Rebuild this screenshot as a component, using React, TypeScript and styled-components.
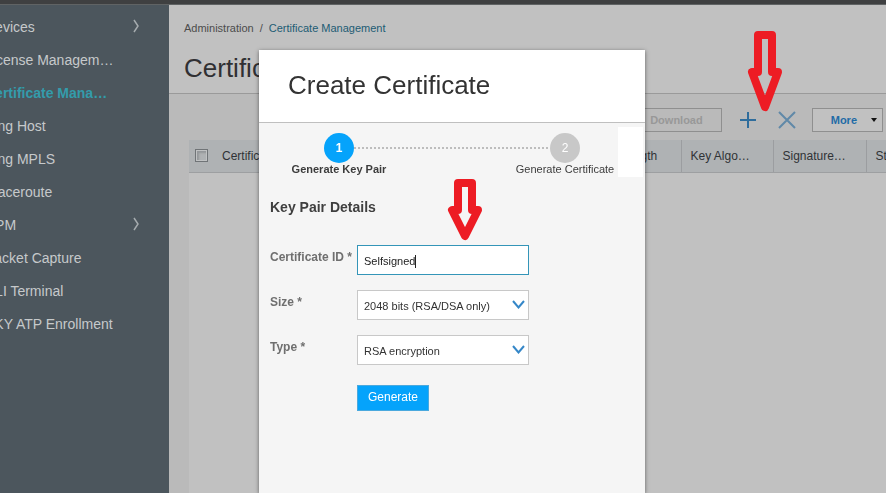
import React from "react";
import styled, { createGlobalStyle } from "styled-components";

const GlobalStyle = createGlobalStyle`
  *, *::before, *::after { box-sizing: border-box; }
  html, body, #root { height: 100%; }
  body {
    margin: 0;
    overflow: hidden;
    font-family: "Liberation Sans", Arial, sans-serif;
    font-size: 12px;
    color: #333;
    background: #c1c1c1;
  }
  button, input, select { font-family: inherit; }
`;

const Page = styled.div`
  display: flex;
  flex-direction: column;
  min-height: 100vh;
`;

const TopBar = styled.div`
  height: 5px;
  background: #3f4041;
  border-bottom: 1px solid #606364;
`;

const Columns = styled.div`
  display: flex;
  flex: 1;
`;

const Sidebar = styled.nav`
  flex: 0 0 169px;
  overflow: hidden;
  background: #4c565d;
`;

const NavList = styled.ul`
  list-style: none;
  margin: 5px 28px 0 -15px;
  padding: 0;
`;

const NavLink = styled.a<{ $active?: boolean }>`
  display: flex;
  align-items: center;
  justify-content: space-between;
  height: 33px;
  font-size: 14px;
  white-space: nowrap;
  text-decoration: none;
  color: ${(p) => (p.$active ? "#339cab" : "#c6c9cb")};
  font-weight: ${(p) => (p.$active ? "bold" : "normal")};
`;

const NavChevron = styled.svg`
  margin-bottom: 2px;
`;

const Main = styled.main`
  flex: 1;
  min-width: 0;
  display: flex;
  flex-direction: column;
  background: #bababa;
`;

const PageHeader = styled.header`
  height: 89px;
  padding: 16px 15px 0;
  background: #c1c1c1;
  border-bottom: 1px solid #9a9a9a;
`;

const Breadcrumb = styled.div`
  display: flex;
  gap: 6px;
  font-size: 11px;
  line-height: 14px;
  color: #4c4c4c;
`;

const CrumbLink = styled.a`
  color: #1d5c74;
  text-decoration: none;
`;

const PageTitle = styled.h1`
  margin: 18px 0 0;
  font-size: 26px;
  line-height: 30px;
  font-weight: normal;
  color: #303033;
`;

const Toolbar = styled.div`
  display: flex;
  justify-content: flex-end;
  align-items: center;
  height: 46px;
  padding: 6px 3px 0 0;
`;

const ToolButton = styled.button<{ $muted?: boolean }>`
  display: flex;
  align-items: center;
  gap: 14px;
  height: 24px;
  padding: 0 ${(p) => (p.$muted ? "18px" : "5px")} 0 18px;
  border: 1px solid #8f8f8f;
  background: ${(p) => (p.$muted ? "transparent" : "#c1c1c1")};
  color: ${(p) => (p.$muted ? "#989898" : "#1f6ba6")};
  font-size: 11px;
  font-weight: bold;
`;

const IconButton = styled.button`
  display: flex;
  padding: 0;
  border: 0;
  background: none;
  margin-left: 17px;
  & + & { margin-left: 21px; }
  & + ${ToolButton} { margin-left: 16px; }
`;

const TableArea = styled.div`
  flex: 1;
  margin-left: 20px;
  overflow: hidden;
  background: #c1c1c1;
`;

const Grid = styled.table`
  width: 768px;
  table-layout: fixed;
  border-collapse: collapse;
`;

const Col = styled.col<{ $w: number }>`
  width: ${(p) => p.$w}px;
`;

const HeadCell = styled.th<{ $plain?: boolean }>`
  height: 32px;
  padding: 0 8px 0 9px;
  text-align: left;
  font-size: 12px;
  font-weight: normal;
  white-space: nowrap;
  color: #303236;
  background: #afb2b4;
  border-bottom: 1px solid #9d9fa1;
  border-right: ${(p) => (p.$plain ? "0" : "1px solid #9b9da0")};
`;

const Tick = styled.input`
  appearance: none;
  display: block;
  width: 13px;
  height: 13px;
  margin: 0 -3px;
  border: 1px solid #707477;
  background: #afb2b4;
  box-shadow: inset 0 0 0 1px #c0c2c3, inset 2px 2px 2px 1px #94979a;
`;

const Overlay = styled.div`
  position: fixed;
  inset: 0;
  display: flex;
  justify-content: center;
  padding: 50px 0 0 18px;
`;

const Dialog = styled.section`
  flex: 0 1 386px;
  background: #f5f5f5;
  box-shadow: 0 1px 4px rgba(0, 0, 0, 0.5);
`;

const DialogHeader = styled.header`
  height: 73px;
  padding: 20px 29px;
  background: #fff;
  border-bottom: 1px solid #bfbfbf;
`;

const DialogTitle = styled.h2`
  margin: 0;
  font-size: 26px;
  line-height: 30px;
  font-weight: normal;
  color: #333;
`;

const StepBar = styled.div`
  display: flex;
  gap: 4px;
  padding: 4px 2px 0 31px;
`;

const Steps = styled.div`
  flex: 1;
  display: grid;
  grid-template-columns: 98px 1fr 98px;
  grid-template-rows: 30px 13px;
  padding-top: 6px;
  justify-items: center;
`;

const StepCircle = styled.span<{ $active?: boolean; $col: number }>`
  grid-row: 1;
  grid-column: ${(p) => p.$col};
  width: 30px;
  line-height: 30px;
  border-radius: 50%;
  text-align: center;
  font-size: 12px;
  color: #fff;
  font-weight: ${(p) => (p.$active ? "bold" : "normal")};
  background: ${(p) => (p.$active ? "#05a3fb" : "#c8c8c8")};
`;

const StepLabel = styled.span<{ $active?: boolean; $col: number }>`
  grid-row: 2;
  grid-column: ${(p) => p.$col};
  font-size: 11px;
  line-height: 13px;
  white-space: nowrap;
  color: #3c3c3c;
  font-weight: ${(p) => (p.$active ? "bold" : "normal")};
`;

const Connector = styled.span`
  grid-row: 1;
  grid-column: 1 / -1;
  align-self: center;
  justify-self: stretch;
  height: 2px;
  margin: 0 64px;
  background: repeating-linear-gradient(90deg, #bdbdbd 0 2px, transparent 2px 4px);
`;

const BlankPane = styled.div`
  width: 25px;
  height: 50px;
  background: #fff;
`;

const Form = styled.form`
  padding: 21px 11px;
`;

const SectionTitle = styled.h3`
  margin: 0 0 29px;
  font-size: 14px;
  line-height: 18px;
  color: #3f3f3f;
`;

const Field = styled.div`
  display: grid;
  grid-template-columns: 87px 172px;
  align-items: start;
  margin-bottom: 15px;
`;

const Label = styled.label`
  padding-top: 5px;
  font-size: 12px;
  line-height: 14px;
  font-weight: bold;
  white-space: nowrap;
  color: #6f6f6f;
`;

const TextInput = styled.input`
  width: 100%;
  height: 30px;
  padding: 2px 6px 0;
  border: 1px solid #3495b8;
  border-radius: 0;
  outline: 0;
  background: #fff;
  font-size: 11px;
  color: #222;
`;

const InputWrap = styled.span`
  display: grid;
  align-items: center;
  > * { grid-area: 1 / 1; }
`;

const Caret = styled.span`
  width: 1px;
  height: 13px;
  margin: 2px 0 0 58px;
  background: #222;
  pointer-events: none;
`;

const SelectBox = styled(InputWrap)`
  > svg {
    justify-self: end;
    margin: 0 4px 2px 0;
    pointer-events: none;
  }
`;

const Select = styled.select`
  appearance: none;
  width: 100%;
  height: 30px;
  padding: 2px 6px 0;
  border: 1px solid #c8c8c8;
  border-radius: 0;
  background: #fff;
  font-size: 11px;
  color: #333;
`;

const Submit = styled.button`
  display: block;
  height: 26px;
  margin: 20px 0 0 87px;
  padding: 0 10px 2px;
  border: 1px solid #4aa9de;
  background: #05a3fb;
  color: #fff;
  font-size: 12px;
`;

const ArrowMark = styled.svg<{ $x: number; $y: number }>`
  position: fixed;
  left: ${(p) => p.$x}px;
  top: ${(p) => p.$y}px;
  pointer-events: none;
`;

const navItems = [
  { label: "Devices", more: true },
  { label: "License Managem…" },
  { label: "Certificate Mana…", active: true },
  { label: "Ping Host" },
  { label: "Ping MPLS" },
  { label: "Traceroute" },
  { label: "RPM", more: true },
  { label: "Packet Capture" },
  { label: "CLI Terminal" },
  { label: "SKY ATP Enrollment" },
];

const columns = [
  { label: "Certificate ID", width: 374 },
  { label: "Key Length", width: 94 },
  { label: "Key Algo…", width: 92 },
  { label: "Signature…", width: 93 },
  { label: "Status", width: 91 },
];

const Chevron = () => (
  <NavChevron width="9" height="14" viewBox="0 0 9 14" fill="none" stroke="#a5abae" strokeWidth="1.5">
    <path d="M2 1 6 7 2 13" />
  </NavChevron>
);

const DownChevron = () => (
  <svg width="13" height="9" viewBox="0 0 13 9" fill="none" stroke="#3587c8" strokeWidth="2">
    <path d="M1 1 6.5 7.5 12 1" />
  </svg>
);

const RedArrow = ({ x, y, neck, tip }: { x: number; y: number; neck: number; tip: number }) => (
  <ArrowMark $x={x} $y={y} width="36" height={tip + 6} viewBox={`0 0 36 ${tip + 6}`} aria-hidden="true">
    <path
      d={`M11 4H25V${neck}H31L18 ${tip} 5 ${neck}H11Z`}
      fill="none"
      stroke="#ed1c24"
      strokeWidth="8"
      strokeLinejoin="round"
    />
  </ArrowMark>
);

export default function App() {
  return (
    <>
      <GlobalStyle />
      <Page>
        <TopBar />
        <Columns>
          <Sidebar>
            <NavList>
              {navItems.map((item) => (
                <li key={item.label}>
                  <NavLink href="#" $active={item.active}>
                    {item.label}
                    {item.more && <Chevron />}
                  </NavLink>
                </li>
              ))}
            </NavList>
          </Sidebar>
          <Main>
            <PageHeader>
              <Breadcrumb>
                <span>Administration</span>
                <span>/</span>
                <CrumbLink href="#">Certificate Management</CrumbLink>
              </Breadcrumb>
              <PageTitle>Certificates</PageTitle>
            </PageHeader>
            <Toolbar>
              <ToolButton $muted disabled>
                Download
              </ToolButton>
              <IconButton aria-label="Add">
                <svg width="18" height="18" viewBox="0 0 18 18" stroke="#2f6d9c" strokeWidth="2">
                  <path d="M9 1V17M1 9H17" />
                </svg>
              </IconButton>
              <IconButton aria-label="Delete">
                <svg width="18" height="18" viewBox="0 0 18 18" stroke="#6089a8" strokeWidth="2">
                  <path d="M1 1 17 17M17 1 1 17" />
                </svg>
              </IconButton>
              <ToolButton>
                More
                <svg width="6" height="4" viewBox="0 0 6 4">
                  <path d="M0 0H6L3 4Z" fill="#111" />
                </svg>
              </ToolButton>
            </Toolbar>
            <TableArea>
              <Grid>
                <colgroup>
                  <Col $w={24} />
                  {columns.map((c) => (
                    <Col key={c.label} $w={c.width} />
                  ))}
                </colgroup>
                <thead>
                  <tr>
                    <HeadCell $plain>
                      <Tick type="checkbox" aria-label="Select all" />
                    </HeadCell>
                    {columns.map((c) => (
                      <HeadCell key={c.label}>{c.label}</HeadCell>
                    ))}
                  </tr>
                </thead>
              </Grid>
            </TableArea>
          </Main>
        </Columns>
      </Page>
      <Overlay>
        <Dialog role="dialog" aria-labelledby="dialog-title">
          <DialogHeader>
            <DialogTitle id="dialog-title">Create Certificate</DialogTitle>
          </DialogHeader>
          <StepBar>
            <Steps>
              <StepCircle $active $col={1}>1</StepCircle>
              <Connector />
              <StepCircle $col={3}>2</StepCircle>
              <StepLabel $active $col={1}>Generate Key Pair</StepLabel>
              <StepLabel $col={3}>Generate Certificate</StepLabel>
            </Steps>
            <BlankPane />
          </StepBar>
          <Form onSubmit={(e) => e.preventDefault()}>
            <SectionTitle>Key Pair Details</SectionTitle>
            <Field>
              <Label htmlFor="cert-id">Certificate ID *</Label>
              <InputWrap>
                <TextInput id="cert-id" defaultValue="Selfsigned" />
                <Caret />
              </InputWrap>
            </Field>
            <Field>
              <Label htmlFor="size">Size *</Label>
              <SelectBox>
                <Select id="size">
                  <option>2048 bits (RSA/DSA only)</option>
                </Select>
                <DownChevron />
              </SelectBox>
            </Field>
            <Field>
              <Label htmlFor="type">Type *</Label>
              <SelectBox>
                <Select id="type">
                  <option>RSA encryption</option>
                </Select>
                <DownChevron />
              </SelectBox>
            </Field>
            <Submit type="submit">Generate</Submit>
          </Form>
        </Dialog>
      </Overlay>
      <RedArrow x={747} y={31} neck={41} tip={76} />
      <RedArrow x={447} y={179} neck={31} tip={57} />
    </>
  );
}
